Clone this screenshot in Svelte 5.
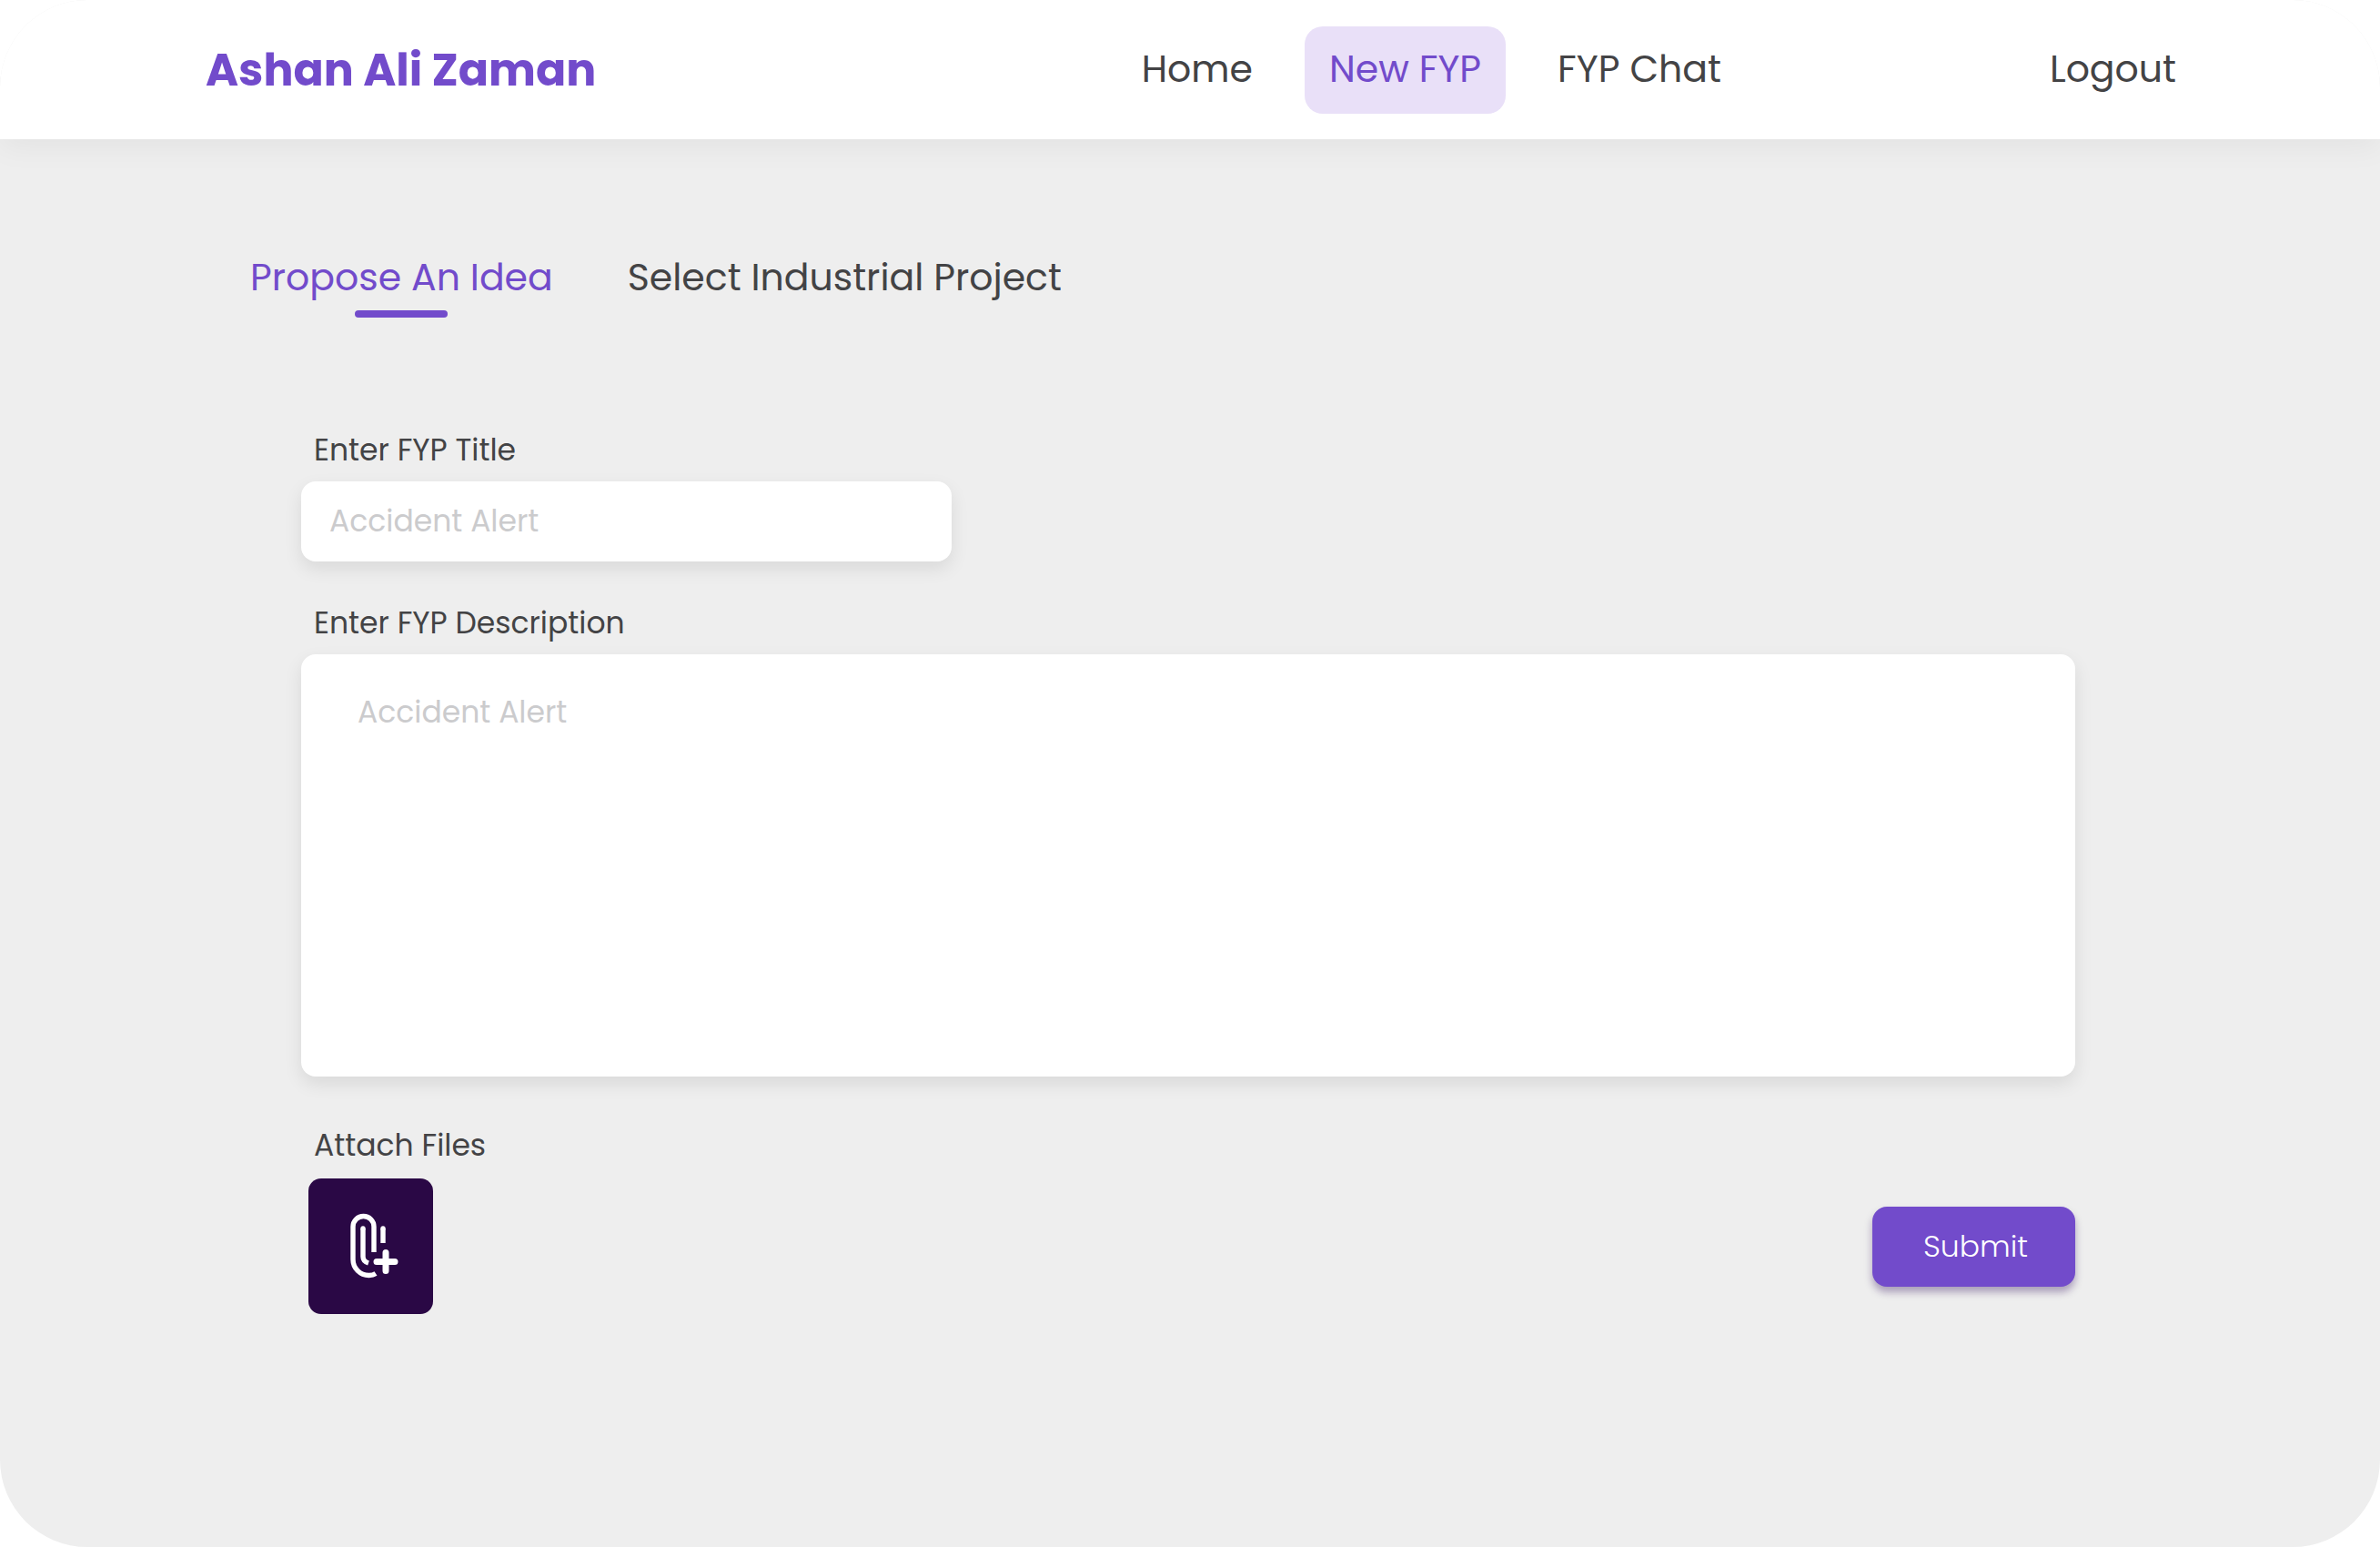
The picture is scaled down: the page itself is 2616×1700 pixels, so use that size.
<script lang="ts">
	const links = ['Home', 'New FYP', 'FYP Chat'];
	const tabs = ['Propose An Idea', 'Select Industrial Project'];

	let activeLink = $state('New FYP');
	let activeTab = $state('Propose An Idea');
	let title = $state('');
	let description = $state('');

	function submitProposal(event: SubmitEvent) {
		event.preventDefault();
	}
</script>

<div class="page">
	<header>
		<h1>Ashan Ali Zaman</h1>
		<nav>
			{#each links as link}
				<a href="#top" class:active={link === activeLink} onclick={() => (activeLink = link)}>{link}</a>
			{/each}
		</nav>
		<a href="#logout">Logout</a>
	</header>

	<main>
		<div class="tabs" role="tablist">
			{#each tabs as tab}
				<button
					type="button"
					role="tab"
					aria-selected={tab === activeTab}
					class:active={tab === activeTab}
					onclick={() => (activeTab = tab)}>{tab}</button
				>
			{/each}
		</div>

		<form onsubmit={submitProposal}>
			<div class="field">
				<label for="title">Enter FYP Title</label>
				<input id="title" class="title" type="text" placeholder="Accident Alert" bind:value={title} />
			</div>

			<div class="field">
				<label for="description">Enter FYP Description</label>
				<textarea id="description" placeholder="Accident Alert" bind:value={description}></textarea>
			</div>

			<div class="bottom">
				<div class="field">
					<label for="files">Attach Files</label>
					<div class="attach">
						<svg viewBox="16 20 64 80" aria-hidden="true">
							<path d="M51 66V38a11.5 11.5 0 0 0-23 0V74a17.5 17.5 0 0 0 17.5 17.5q4.500 0 7.500-2" />
							<path d="M39 40V71q0 5 6 7" />
							<path d="M61 40V56" />
							<circle cx="39" cy="40" r="2.7" />
							<circle cx="61" cy="40" r="2.7" />
							<path class="plus" d="M64 66.5v20M54 76.5h20" />
						</svg>
						<input id="files" type="file" multiple />
					</div>
				</div>
				<button class="submit" type="submit">Submit</button>
			</div>
		</form>
	</main>
</div>

<style>
	:global(body) {
		margin: 0;
		background: #fff;
	}

	.page {
		min-height: 100vh;
		display: flex;
		flex-direction: column;
		overflow: hidden;
		border-radius: 96px;
		background: #eee;
		color: #434345;
		font-family: Poppins, Inter, 'Liberation Sans', sans-serif;
		font-size: 33px;
		line-height: 40px;
	}

	* {
		box-sizing: border-box;
	}

	header {
		display: flex;
		align-items: center;
		padding: 29px 224px 28px 226px;
		background: #fff;
		box-shadow: 0 8px 32px rgba(0, 0, 0, 0.05);
	}

	h1 {
		margin: 0 auto 0 0;
		color: #724bcb;
		font-size: 49px;
		line-height: 56px;
		font-weight: 700;
	}

	nav {
		display: flex;
		gap: 30px;
		margin-right: 334px;
	}

	header a {
		padding: 19px 0 21px;
		color: inherit;
		font-size: 41px;
		line-height: 56px;
		text-decoration: none;
	}

	nav a {
		padding-left: 27px;
		padding-right: 27px;
		border-radius: 20px;
	}

	nav a.active {
		background: #e9e0f8;
		color: #724bcb;
	}

	main {
		padding: 124px 275px 96px;
	}

	.tabs {
		display: flex;
		gap: 82px;
	}

	button {
		border: 0;
		font: inherit;
		cursor: pointer;
	}

	.tabs button {
		display: flex;
		flex-direction: column;
		align-items: center;
		gap: 8px;
		padding: 0;
		background: none;
		color: inherit;
		font-size: 41px;
		line-height: 56px;
	}

	.tabs button::after {
		content: '';
		width: 102px;
		height: 8px;
		border-radius: 4px;
	}

	.tabs .active {
		color: #724bcb;
	}

	.tabs .active::after {
		background: #724bcb;
	}

	form {
		display: flex;
		flex-direction: column;
		gap: 48px;
		margin: 126px 60px 0 56px;
	}

	.field {
		display: flex;
		flex-direction: column;
		align-items: flex-start;
		gap: 14px;
	}

	label {
		padding-left: 14px;
	}

	.title,
	textarea {
		width: 100%;
		border: 0;
		border-radius: 16px;
		background: #fff;
		box-shadow: 0 8px 20px rgba(0, 0, 0, 0.09);
		color: inherit;
		font: inherit;
	}

	.title {
		max-width: 715px;
		height: 88px;
		padding: 0 31px;
	}

	textarea {
		display: block;
		height: 464px;
		padding: 44px 62px;
		resize: none;
	}

	::placeholder {
		color: #cbcbcd;
		opacity: 1;
	}

	.bottom {
		display: flex;
		align-items: flex-end;
		justify-content: space-between;
		padding-top: 8px;
	}

	.bottom .field {
		gap: 16px;
	}

	.attach {
		position: relative;
		display: grid;
		place-items: center;
		width: 137px;
		height: 149px;
		margin-left: 8px;
		border-radius: 14px;
		background: #2a0845;
	}

	.attach input {
		position: absolute;
		inset: 0;
		width: 100%;
		opacity: 0;
		cursor: pointer;
	}

	svg {
		width: 64px;
		height: 80px;
		fill: none;
		stroke: #fff;
		stroke-width: 5.4;
	}

	svg circle {
		fill: #fff;
		stroke: none;
	}

	.plus {
		stroke-width: 7;
		stroke-linecap: round;
	}

	.submit {
		height: 88px;
		margin-bottom: 30px;
		padding: 0 52px 0 56px;
		border-radius: 16px;
		background: #724bcb;
		box-shadow: 0 6px 8px rgba(43, 8, 90, 0.35);
		color: #fff;
		font-weight: 300;
	}
</style>
